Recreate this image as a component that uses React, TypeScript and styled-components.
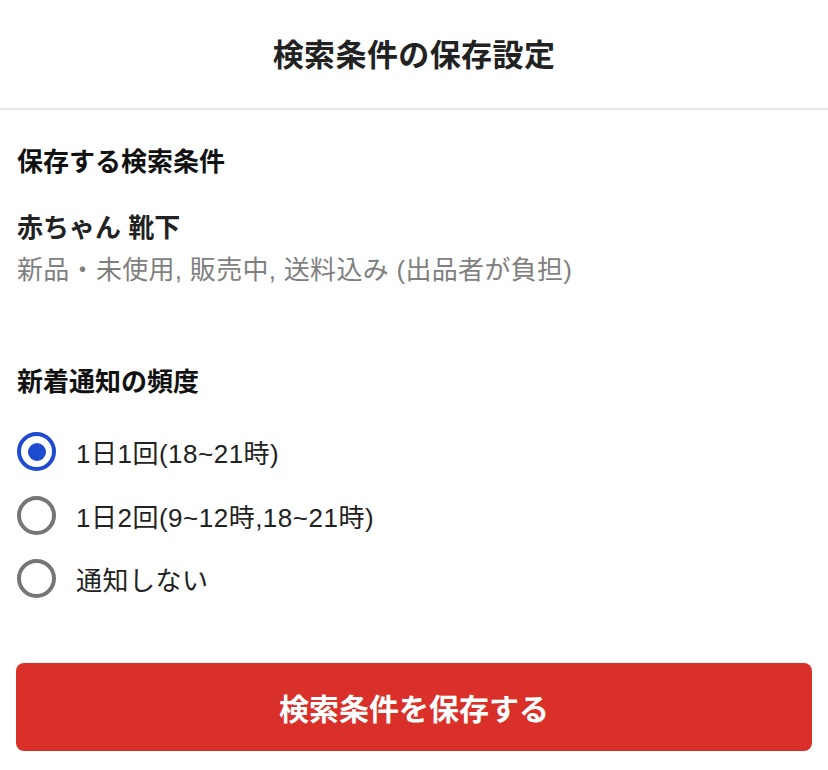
import { useState } from "react";
import styled, { createGlobalStyle } from "styled-components";

const GlobalStyle = createGlobalStyle`
  html, body {
    margin: 0;
    padding: 0;
    background: #ffffff;
  }
  body {
    font-family: "Liberation Sans", "Noto Sans CJK JP", sans-serif;
    color: #222222;
  }
`;

const Page = styled.div`
  width: 828px;
  min-height: 770px;
  background: #ffffff;
`;

const Header = styled.header`
  box-sizing: border-box;
  height: 110px;
  padding-bottom: 4px;
  display: flex;
  align-items: center;
  justify-content: center;
  border-bottom: 2px solid #e6e6e6;
`;

const HeaderTitle = styled.h1`
  margin: 0;
  font-size: 31px;
  font-weight: 700;
  color: #222222;
  letter-spacing: 0.4px;
`;

const Body = styled.div`
  padding: 34px 16px 0 17px;
  display: flex;
  flex-direction: column;
`;

const SectionTitle = styled.h2<{ $top?: number }>`
  margin: ${({ $top }) => $top ?? 0}px 0 0;
  font-size: 26px;
  line-height: 36px;
  font-weight: 700;
  color: #111111;
`;

const KeywordName = styled.div`
  margin-top: 27px;
  font-size: 26px;
  line-height: 42px;
  font-weight: 700;
  color: #222222;
`;

const KeywordDetail = styled.div`
  font-size: 26px;
  line-height: 42px;
  color: #7f7f7f;
  letter-spacing: 0.3px;
`;

const RadioList = styled.div`
  margin-top: 20px;
  display: flex;
  flex-direction: column;
`;

const RadioRow = styled.label`
  height: 63.5px;
  display: flex;
  align-items: center;
  gap: 20px;
  cursor: pointer;
`;

const RadioCircle = styled.span<{ $checked: boolean }>`
  box-sizing: border-box;
  width: 39px;
  height: 39px;
  border-radius: 50%;
  border: 4px solid ${({ $checked }) => ($checked ? "#1f4bd0" : "#767676")};
  display: flex;
  align-items: center;
  justify-content: center;
  flex-shrink: 0;

  &::after {
    content: "";
    width: 18px;
    height: 18px;
    border-radius: 50%;
    background: #1f4bd0;
    display: ${({ $checked }) => ($checked ? "block" : "none")};
  }
`;

const HiddenInput = styled.input`
  display: none;
`;

const RadioLabel = styled.span`
  font-size: 26px;
  color: #222222;
  letter-spacing: 0.5px;
`;

const SaveButton = styled.button`
  margin-top: 52px;
  width: 796px;
  margin-left: -1px;
  height: 88px;
  border: none;
  border-radius: 8px;
  background: #d9302a;
  color: #ffffff;
  font-family: "Liberation Sans", "Noto Sans CJK JP", sans-serif;
  font-size: 30px;
  font-weight: 700;
  cursor: pointer;
`;

const options = [
  { id: "once", label: "1日1回(18~21時)" },
  { id: "twice", label: "1日2回(9~12時,18~21時)" },
  { id: "none", label: "通知しない" },
];

const App = () => {
  const [frequency, setFrequency] = useState("once");

  return (
    <Page>
      <GlobalStyle />
      <Header>
        <HeaderTitle>検索条件の保存設定</HeaderTitle>
      </Header>
      <Body>
        <SectionTitle>保存する検索条件</SectionTitle>
        <KeywordName>赤ちゃん 靴下</KeywordName>
        <KeywordDetail>新品・未使用, 販売中, 送料込み (出品者が負担)</KeywordDetail>

        <SectionTitle $top={73}>新着通知の頻度</SectionTitle>
        <RadioList>
          {options.map((option) => (
            <RadioRow key={option.id}>
              <HiddenInput
                type="radio"
                name="frequency"
                checked={frequency === option.id}
                onChange={() => setFrequency(option.id)}
              />
              <RadioCircle $checked={frequency === option.id} />
              <RadioLabel>{option.label}</RadioLabel>
            </RadioRow>
          ))}
        </RadioList>

        <SaveButton>検索条件を保存する</SaveButton>
      </Body>
    </Page>
  );
};

export default App;
